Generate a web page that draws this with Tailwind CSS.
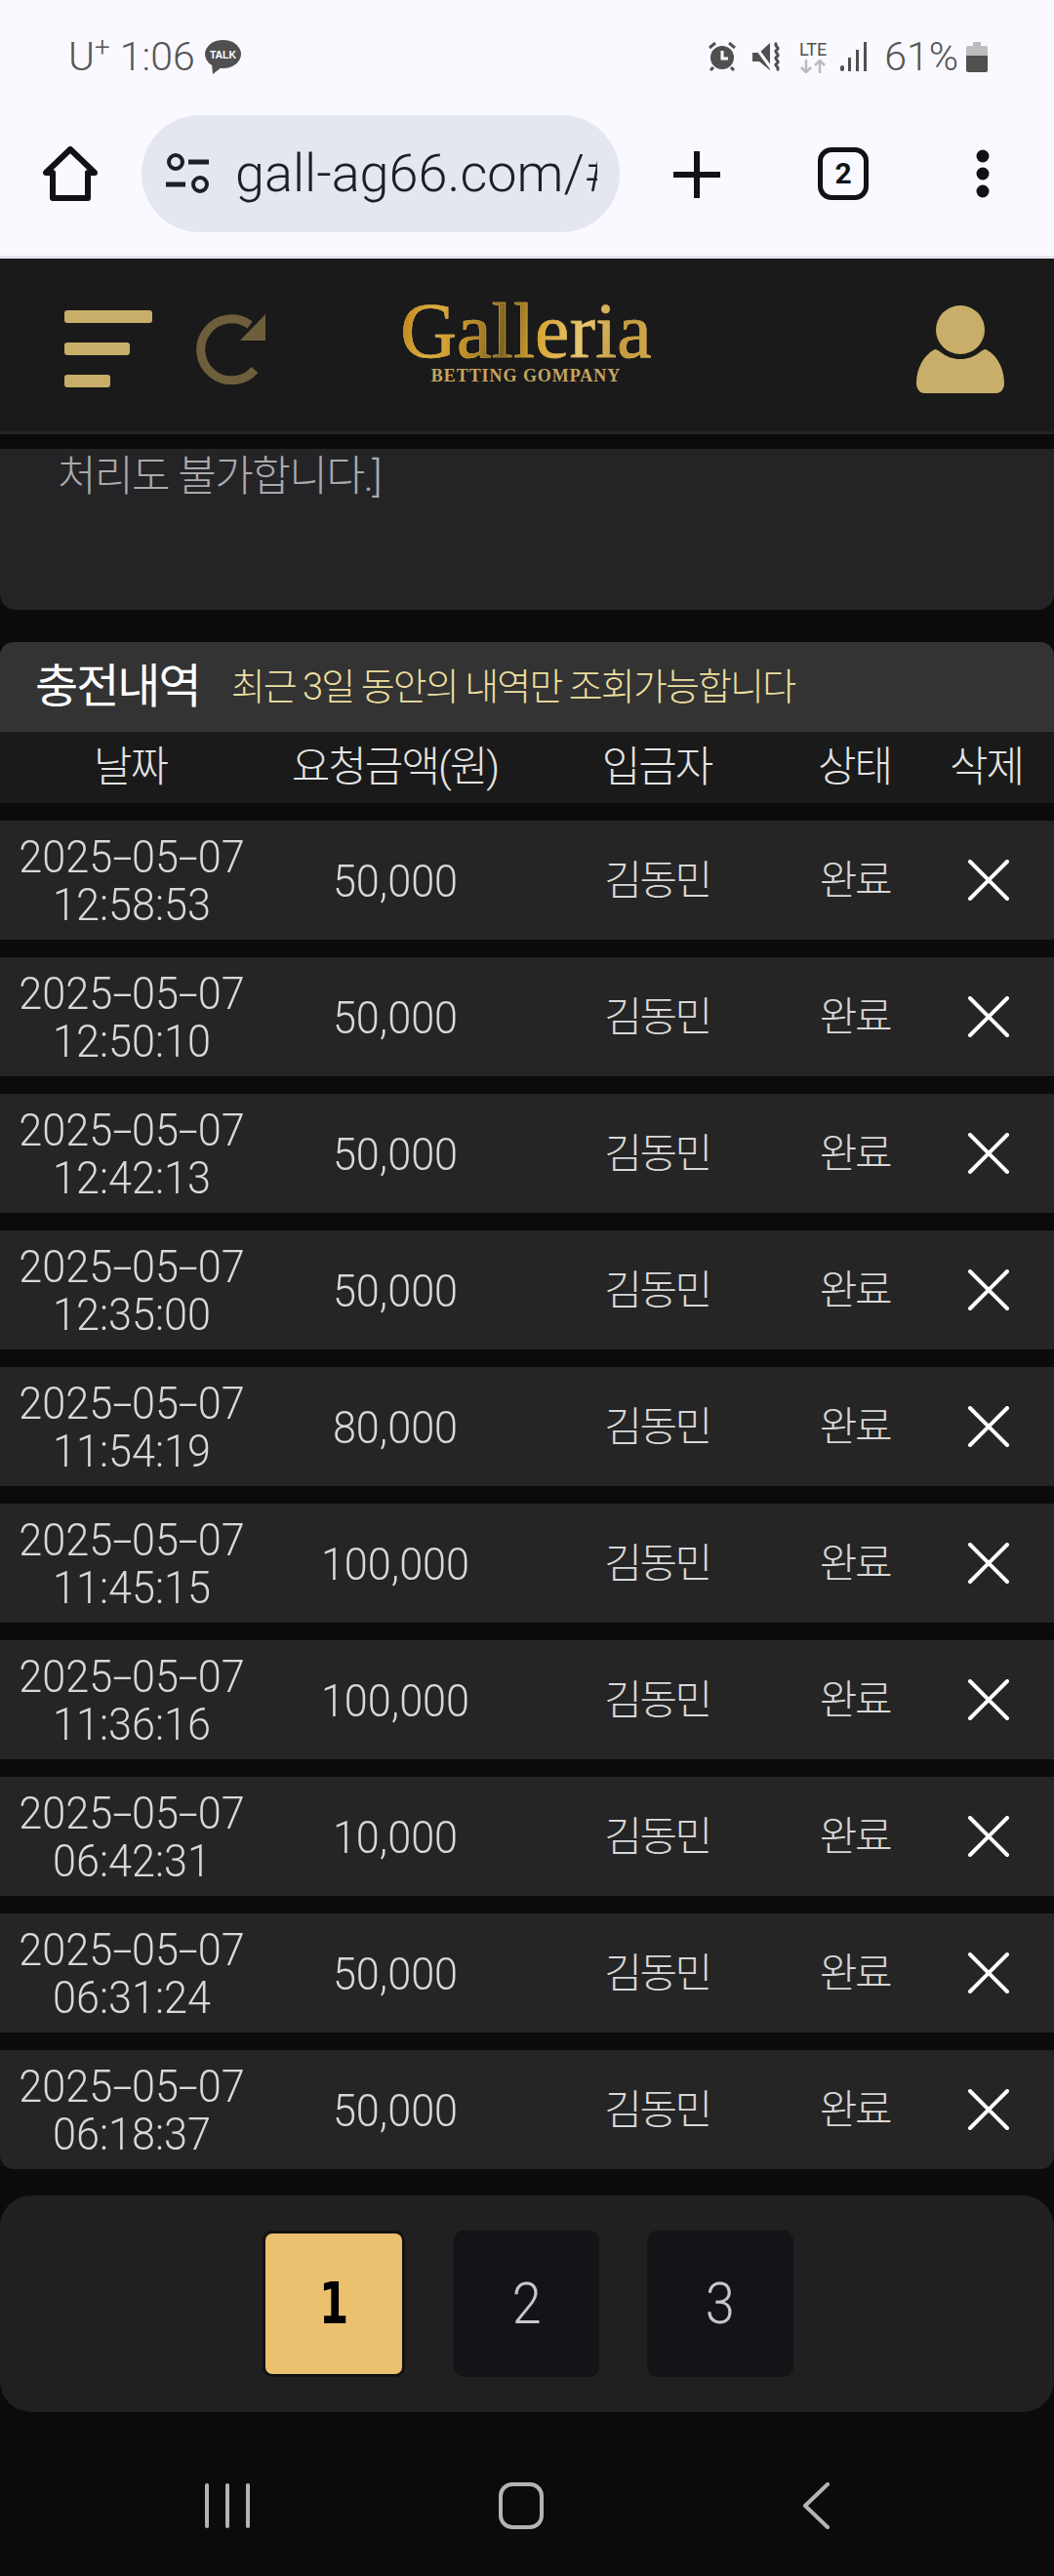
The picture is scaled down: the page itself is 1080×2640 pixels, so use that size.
<!DOCTYPE html>
<html lang="ko"><head><meta charset="utf-8">
<script src="https://cdn.jsdelivr.net/npm/@tailwindcss/browser@4"></script>
</head>
<body class="m-0 bg-[#0b0b0b]">
<div class="w-[1080px] h-[2640px] overflow-hidden flex flex-col bg-[#0b0b0b] font-['Roboto','Noto_Sans_CJK_KR',sans-serif] font-light text-[#d8d8d8]">

  <!-- status bar -->
  <div class="h-[118px] bg-[#f9f9ff] pl-[70px] pr-[68px] pt-[36px] flex justify-between items-start text-[#555] text-[41px] leading-[44px] shrink-0">
    <div class="flex items-start gap-[11px]">
      <span>U<sup class="text-[28px] leading-none">+</sup> 1:06</span>
      <svg width="37" height="35" viewBox="0 0 37 35" class="mt-[5px] -ml-[1px]"><ellipse cx="18.500" cy="14.500" rx="18.500" ry="14.500" fill="#505050"/><path d="M7 24L8 35l9-7z" fill="#505050"/><text x="18.500" y="18.500" font-size="10.500" font-family="Liberation Sans" fill="#fff" text-anchor="middle" font-weight="700">TALK</text></svg>
    </div>
    <div class="flex items-center">
      <svg width="30" height="30" viewBox="0 0 30 30" class="mr-[16px]"><circle cx="15" cy="16" r="12" fill="#505050"/><path d="M15 9v8h6" stroke="#fff" stroke-width="3" fill="none"/><path d="M2 6l6-5M28 6l-6-5M6 26l-3 3M24 26l3 3" stroke="#505050" stroke-width="3"/></svg>
      <svg width="30" height="30" viewBox="0 0 30 30" class="mr-[16px]"><path d="M0 11h7l11-10v28L7 20H0z" fill="#505050"/><path d="M1 2l19 26" stroke="#f9f9ff" stroke-width="3"/><path d="M25 1c-4 3 4 5 0 7s4 5 0 7 4 5 0 7 4 4 0 7" stroke="#505050" stroke-width="3" fill="none"/></svg>
      <div class="flex flex-col items-center w-[32px] mr-[12px]">
        <span class="text-[18px] leading-[20px] font-normal text-[#505050]">LTE</span>
        <svg width="30" height="14" viewBox="0 0 30 14"><path d="M8 0v13M3 8l5 5 5-5M22 14V1M17 6l5-5 5 5" stroke="#bbb" stroke-width="2.500" fill="none"/></svg>
      </div>
      <svg width="28" height="30" viewBox="0 0 28 30" class="mr-[17px]"><rect x="0" y="24" width="4" height="6" rx="2" fill="#505050"/><rect x="8" y="16" width="3" height="14" fill="#505050"/><rect x="16" y="8" width="3" height="22" fill="#505050"/><rect x="24" y="0" width="3" height="30" fill="#505050"/></svg>
      <span class="mr-[8px]">61%</span>
      <svg width="22" height="31" viewBox="0 0 22 31"><path d="M7 0h8v4h5a2 2 0 0 1 2 2v8H0V6a2 2 0 0 1 2-2h5z" fill="#bdbdbd"/><path d="M0 14h22v15a2 2 0 0 1-2 2H2a2 2 0 0 1-2-2z" fill="#505050"/></svg>
    </div>
  </div>

  <!-- browser toolbar -->
  <div class="h-[147px] bg-[#f9f9ff] border-b-[3px] border-[#e6e6ee] relative shrink-0 flex items-start">
    <svg width="56" height="56" viewBox="0 0 56 56" class="ml-[44px] mt-[32px]"><path d="M28 3L3 27h7v26h36V27h7z" fill="none" stroke="#111118" stroke-width="6" stroke-linejoin="round"/></svg>
    <div class="ml-[45px] w-[490px] h-[120px] rounded-full bg-[#e4e7ef] flex items-center pl-[25px] text-[#1e1e28]">
      <svg width="44" height="44" viewBox="0 0 44 44" class="shrink-0"><circle cx="10" cy="10" r="7" fill="none" stroke="#1e1e28" stroke-width="4"/><path d="M23 10h21M0 33h20" stroke="#1e1e28" stroke-width="5"/><circle cx="35" cy="33" r="7" fill="none" stroke="#1e1e28" stroke-width="4"/></svg>
      <div class="ml-[27px] w-[371px] overflow-hidden whitespace-nowrap text-[54px] leading-[60px] font-light">gall-ag66.com/#</div>
    </div>
    <svg width="48" height="48" viewBox="0 0 48 48" class="ml-[55px] mt-[37px]"><path d="M24 1v46M1 24h46" stroke="#111118" stroke-width="6" stroke-linecap="round"/></svg>
    <div class="ml-[100px] mt-[33px] w-[52px] h-[54px] border-[5px] border-[#111118] rounded-[14px] flex items-center justify-center text-[#111118] text-[30px] font-bold leading-none">2</div>
    <svg width="14" height="50" viewBox="0 0 14 50" class="ml-[110px] mt-[35px]"><circle cx="7" cy="7" r="6.500" fill="#111118"/><circle cx="7" cy="25" r="6.500" fill="#111118"/><circle cx="7" cy="43" r="6.500" fill="#111118"/></svg>
  </div>

  <!-- site header -->
  <div class="h-[180px] bg-[#1a1a1a] border-b-[3px] border-[#252525] relative flex items-start shrink-0">
    <div class="ml-[66px] mt-[53px] w-[90px] flex flex-col gap-[20px]">
      <div class="w-[90px] h-[13px] rounded-[3px] bg-[#c8ae69]"></div>
      <div class="w-[67px] h-[13px] rounded-[3px] bg-[#c8ae69]"></div>
      <div class="w-[47px] h-[13px] rounded-[3px] bg-[#c8ae69]"></div>
    </div>
    <svg width="72" height="72" viewBox="0 0 72 72" class="ml-[45px] mt-[57px]"><path d="M55 11A31.500 31.500 0 1 0 60 57" fill="none" stroke="#6e5f3c" stroke-width="9"/><path d="M71 0V27H45z" fill="#6e5f3c"/></svg>
    <div class="absolute left-[411px] top-[36px] w-[256px] flex flex-col items-center font-['Liberation_Serif',serif] font-normal">
      <span class="text-[80px] leading-[76px] bg-[linear-gradient(100deg,#b97f14_0%,#e0b040_14%,#c08f24_28%,#7f6322_42%,#d9a52f_55%,#e6c878_72%,#c49a3c_86%,#d4a94c_100%)] bg-clip-text text-transparent [-webkit-text-stroke:0.6px_#c9a24a]">Galleria</span>
      <span class="text-[18px] leading-[16px] tracking-[0.950px] font-bold text-[#c4a562] whitespace-nowrap">BETTING GOMPANY</span>
    </div>
    <svg width="90" height="90" viewBox="0 0 90 90" class="ml-auto mr-[51px] mt-[48px]"><ellipse cx="45" cy="25" rx="25" ry="25" fill="#c8ae69"/><path d="M19 45c5 0 10 10 26 10s21-10 26-10c12 6 19 20 19 35 0 6-4 10-8 10H8c-4 0-8-4-8-10 0-15 7-29 19-35z" fill="#c8ae69"/></svg>
  </div>

  <!-- gap before notice -->
  <div class="h-[15px] shrink-0"></div>

  <!-- notice panel -->
  <div class="h-[165px] bg-[#242427] rounded-b-[16px] pl-[59px] text-[#ababab] text-[43px] leading-[56px] tracking-[-1.500px] shrink-0">처리도 불가합니다.]</div>

  <!-- history title -->
  <div class="mt-[33px] h-[92px] bg-[#333333] rounded-t-[14px] flex items-center pl-[36px] shrink-0">
    <span class="text-[48px] text-white tracking-[-2px] font-normal leading-[60px]">충전내역</span>
    <span class="ml-[32px] text-[38px] text-[#ecdf9f] tracking-[-1.900px] leading-[50px]">최근 3일 동안의 내역만 조회가능합니다</span>
  </div>
  <div class="h-[73px] bg-[#1a1a1a] grid grid-cols-[25%_25%_25%_12.500%_12.500%] items-center text-center text-[43px] tracking-[-2px] text-[#e4e4e4] shrink-0">
    <span class="pr-[3px]">날짜</span><span class="pr-[1px]">요청금액(원)</span><span class="pr-[4px]">입금자</span><span class="pr-[4px]">상태</span><span class="pr-[4px]">삭제</span>
  </div>

  <!-- rows -->
  <div class="mt-[18px] flex flex-col gap-[18px] shrink-0">
    <div class="h-[122px] bg-[#252525] grid grid-cols-[25%_25%_25%_12.500%_12.500%] items-center text-center"><div class="flex flex-col items-center scale-x-[0.92] text-[47px] leading-[49px]"><div class="flex"><span>2025</span><span class="scale-x-[1.7] mx-[4px]">-</span><span>05</span><span class="scale-x-[1.7] mx-[4px]">-</span><span>07</span></div><span>12:58:53</span></div><span class="scale-x-[0.92] text-[47px] leading-[49px]">50,000</span><span class="pr-[3px] text-[42px] tracking-[-2.500px]">김동민</span><span class="pr-[3px] text-[42px] tracking-[-2.500px]">완료</span><span class="flex justify-center"><svg width="42" height="42" viewBox="0 0 42 42"><path d="M2 2l38 38M40 2L2 40" stroke="#fff" stroke-width="4" stroke-linecap="round"/></svg></span></div>
    <div class="h-[122px] bg-[#252525] grid grid-cols-[25%_25%_25%_12.500%_12.500%] items-center text-center"><div class="flex flex-col items-center scale-x-[0.92] text-[47px] leading-[49px]"><div class="flex"><span>2025</span><span class="scale-x-[1.7] mx-[4px]">-</span><span>05</span><span class="scale-x-[1.7] mx-[4px]">-</span><span>07</span></div><span>12:50:10</span></div><span class="scale-x-[0.92] text-[47px] leading-[49px]">50,000</span><span class="pr-[3px] text-[42px] tracking-[-2.500px]">김동민</span><span class="pr-[3px] text-[42px] tracking-[-2.500px]">완료</span><span class="flex justify-center"><svg width="42" height="42" viewBox="0 0 42 42"><path d="M2 2l38 38M40 2L2 40" stroke="#fff" stroke-width="4" stroke-linecap="round"/></svg></span></div>
    <div class="h-[122px] bg-[#252525] grid grid-cols-[25%_25%_25%_12.500%_12.500%] items-center text-center"><div class="flex flex-col items-center scale-x-[0.92] text-[47px] leading-[49px]"><div class="flex"><span>2025</span><span class="scale-x-[1.7] mx-[4px]">-</span><span>05</span><span class="scale-x-[1.7] mx-[4px]">-</span><span>07</span></div><span>12:42:13</span></div><span class="scale-x-[0.92] text-[47px] leading-[49px]">50,000</span><span class="pr-[3px] text-[42px] tracking-[-2.500px]">김동민</span><span class="pr-[3px] text-[42px] tracking-[-2.500px]">완료</span><span class="flex justify-center"><svg width="42" height="42" viewBox="0 0 42 42"><path d="M2 2l38 38M40 2L2 40" stroke="#fff" stroke-width="4" stroke-linecap="round"/></svg></span></div>
    <div class="h-[122px] bg-[#252525] grid grid-cols-[25%_25%_25%_12.500%_12.500%] items-center text-center"><div class="flex flex-col items-center scale-x-[0.92] text-[47px] leading-[49px]"><div class="flex"><span>2025</span><span class="scale-x-[1.7] mx-[4px]">-</span><span>05</span><span class="scale-x-[1.7] mx-[4px]">-</span><span>07</span></div><span>12:35:00</span></div><span class="scale-x-[0.92] text-[47px] leading-[49px]">50,000</span><span class="pr-[3px] text-[42px] tracking-[-2.500px]">김동민</span><span class="pr-[3px] text-[42px] tracking-[-2.500px]">완료</span><span class="flex justify-center"><svg width="42" height="42" viewBox="0 0 42 42"><path d="M2 2l38 38M40 2L2 40" stroke="#fff" stroke-width="4" stroke-linecap="round"/></svg></span></div>
    <div class="h-[122px] bg-[#252525] grid grid-cols-[25%_25%_25%_12.500%_12.500%] items-center text-center"><div class="flex flex-col items-center scale-x-[0.92] text-[47px] leading-[49px]"><div class="flex"><span>2025</span><span class="scale-x-[1.7] mx-[4px]">-</span><span>05</span><span class="scale-x-[1.7] mx-[4px]">-</span><span>07</span></div><span>11:54:19</span></div><span class="scale-x-[0.92] text-[47px] leading-[49px]">80,000</span><span class="pr-[3px] text-[42px] tracking-[-2.500px]">김동민</span><span class="pr-[3px] text-[42px] tracking-[-2.500px]">완료</span><span class="flex justify-center"><svg width="42" height="42" viewBox="0 0 42 42"><path d="M2 2l38 38M40 2L2 40" stroke="#fff" stroke-width="4" stroke-linecap="round"/></svg></span></div>
    <div class="h-[122px] bg-[#252525] grid grid-cols-[25%_25%_25%_12.500%_12.500%] items-center text-center"><div class="flex flex-col items-center scale-x-[0.92] text-[47px] leading-[49px]"><div class="flex"><span>2025</span><span class="scale-x-[1.7] mx-[4px]">-</span><span>05</span><span class="scale-x-[1.7] mx-[4px]">-</span><span>07</span></div><span>11:45:15</span></div><span class="scale-x-[0.92] text-[47px] leading-[49px]">100,000</span><span class="pr-[3px] text-[42px] tracking-[-2.500px]">김동민</span><span class="pr-[3px] text-[42px] tracking-[-2.500px]">완료</span><span class="flex justify-center"><svg width="42" height="42" viewBox="0 0 42 42"><path d="M2 2l38 38M40 2L2 40" stroke="#fff" stroke-width="4" stroke-linecap="round"/></svg></span></div>
    <div class="h-[122px] bg-[#252525] grid grid-cols-[25%_25%_25%_12.500%_12.500%] items-center text-center"><div class="flex flex-col items-center scale-x-[0.92] text-[47px] leading-[49px]"><div class="flex"><span>2025</span><span class="scale-x-[1.7] mx-[4px]">-</span><span>05</span><span class="scale-x-[1.7] mx-[4px]">-</span><span>07</span></div><span>11:36:16</span></div><span class="scale-x-[0.92] text-[47px] leading-[49px]">100,000</span><span class="pr-[3px] text-[42px] tracking-[-2.500px]">김동민</span><span class="pr-[3px] text-[42px] tracking-[-2.500px]">완료</span><span class="flex justify-center"><svg width="42" height="42" viewBox="0 0 42 42"><path d="M2 2l38 38M40 2L2 40" stroke="#fff" stroke-width="4" stroke-linecap="round"/></svg></span></div>
    <div class="h-[122px] bg-[#252525] grid grid-cols-[25%_25%_25%_12.500%_12.500%] items-center text-center"><div class="flex flex-col items-center scale-x-[0.92] text-[47px] leading-[49px]"><div class="flex"><span>2025</span><span class="scale-x-[1.7] mx-[4px]">-</span><span>05</span><span class="scale-x-[1.7] mx-[4px]">-</span><span>07</span></div><span>06:42:31</span></div><span class="scale-x-[0.92] text-[47px] leading-[49px]">10,000</span><span class="pr-[3px] text-[42px] tracking-[-2.500px]">김동민</span><span class="pr-[3px] text-[42px] tracking-[-2.500px]">완료</span><span class="flex justify-center"><svg width="42" height="42" viewBox="0 0 42 42"><path d="M2 2l38 38M40 2L2 40" stroke="#fff" stroke-width="4" stroke-linecap="round"/></svg></span></div>
    <div class="h-[122px] bg-[#252525] grid grid-cols-[25%_25%_25%_12.500%_12.500%] items-center text-center"><div class="flex flex-col items-center scale-x-[0.92] text-[47px] leading-[49px]"><div class="flex"><span>2025</span><span class="scale-x-[1.7] mx-[4px]">-</span><span>05</span><span class="scale-x-[1.7] mx-[4px]">-</span><span>07</span></div><span>06:31:24</span></div><span class="scale-x-[0.92] text-[47px] leading-[49px]">50,000</span><span class="pr-[3px] text-[42px] tracking-[-2.500px]">김동민</span><span class="pr-[3px] text-[42px] tracking-[-2.500px]">완료</span><span class="flex justify-center"><svg width="42" height="42" viewBox="0 0 42 42"><path d="M2 2l38 38M40 2L2 40" stroke="#fff" stroke-width="4" stroke-linecap="round"/></svg></span></div>
    <div class="h-[122px] bg-[#252525] rounded-b-[14px] grid grid-cols-[25%_25%_25%_12.500%_12.500%] items-center text-center"><div class="flex flex-col items-center scale-x-[0.92] text-[47px] leading-[49px]"><div class="flex"><span>2025</span><span class="scale-x-[1.7] mx-[4px]">-</span><span>05</span><span class="scale-x-[1.7] mx-[4px]">-</span><span>07</span></div><span>06:18:37</span></div><span class="scale-x-[0.92] text-[47px] leading-[49px]">50,000</span><span class="pr-[3px] text-[42px] tracking-[-2.500px]">김동민</span><span class="pr-[3px] text-[42px] tracking-[-2.500px]">완료</span><span class="flex justify-center"><svg width="42" height="42" viewBox="0 0 42 42"><path d="M2 2l38 38M40 2L2 40" stroke="#fff" stroke-width="4" stroke-linecap="round"/></svg></span></div>
  </div>

  <!-- pagination -->
  <div class="mt-[27px] h-[222px] bg-[#202020] rounded-[32px] flex items-center pl-[269px] shrink-0">
    <div class="w-[146px] h-[150px] rounded-[10px] bg-[#ebc16f] border-[3px] border-[#121214] flex items-center justify-center text-[#000] text-[58px] font-bold font-['DejaVu_Sans',sans-serif]"><span class="scale-x-[0.75]">1</span></div>
    <div class="ml-[50px] w-[149px] h-[150px] rounded-[10px] bg-[#141418] flex items-center justify-center text-[#c3c9cc] text-[60px]"><span class="scale-x-[0.9]">2</span></div>
    <div class="ml-[49px] w-[150px] h-[150px] rounded-[10px] bg-[#141418] flex items-center justify-center text-[#c3c9cc] text-[60px]"><span class="scale-x-[0.9]">3</span></div>
  </div>

  <!-- android nav -->
  <div class="mt-[72px] h-[48px] flex items-start shrink-0">
    <div class="ml-[210px] mt-[1px] flex gap-[17px]">
      <div class="w-[4px] h-[46px] rounded-full bg-[#b4b4b4]"></div>
      <div class="w-[4px] h-[46px] rounded-full bg-[#b4b4b4]"></div>
      <div class="w-[4px] h-[46px] rounded-full bg-[#b4b4b4]"></div>
    </div>
    <div class="ml-[255px] w-[46px] h-[48px] border-[4px] border-[#b4b4b4] rounded-[14px]"></div>
    <svg width="28" height="48" viewBox="0 0 28 48" class="ml-[265px]"><path d="M26 2L3 24l23 22" fill="none" stroke="#b4b4b4" stroke-width="4" stroke-linecap="round" stroke-linejoin="round"/></svg>
  </div>
</div>
</body></html>
